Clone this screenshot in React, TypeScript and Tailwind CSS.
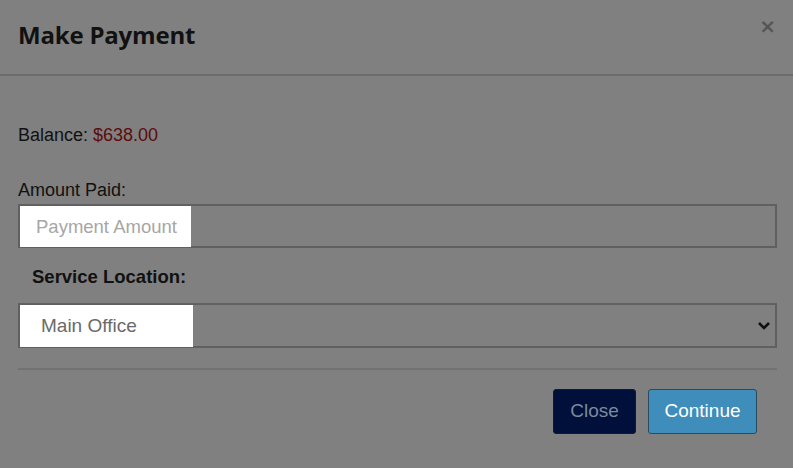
import React from "react";

export default function App() {
  return (
    <div className="w-[793px] h-[468px] bg-[#808080] overflow-hidden" style={{ fontFamily: '"Liberation Sans", Arial, sans-serif' }}>
      <div className="h-[76px] flex items-start justify-between border-b-2 border-[#6c6c6c]">
        <h1 className="pl-[18px] pt-[19px] text-[24px] leading-[32px] font-bold text-[#111] tracking-[-0.2px]" style={{ fontFamily: '"Open Sans", sans-serif' }}>
          Make Payment
        </h1>
        <div className="pr-[17px] pt-[14px] text-[#555] text-[20px] font-bold leading-[24px]" style={{ fontFamily: '"DejaVu Sans", sans-serif' }}>×</div>
      </div>
      <div className="px-[18px] pr-[16px]">
        <div className="pt-[48px] text-[18px] leading-[22px] text-[#111]">
          Balance: <span className="text-[#5c0b0d]">$638.00</span>
        </div>
        <div className="pt-[33px] text-[18px] leading-[22px] text-[#111]">Amount Paid:</div>
        <div className="mt-[3px] h-[44px] border-2 border-[#606060] flex">
          <div className="w-[171px] h-[41px] bg-white flex items-center pl-[16px] text-[18.5px] text-[#a6a6a6]">Payment Amount</div>
        </div>
        <div className="pt-[18px] pl-[14px] text-[18.5px] font-bold leading-[22px] text-[#111]">Service Location:</div>
        <div className="mt-[15px] h-[45px] border-2 border-[#606060] flex items-center justify-between">
          <div className="w-[173px] h-[42px] self-start bg-white flex items-center pl-[21px] text-[19px] text-[#6a6a6a]">Main Office</div>
          <svg width="14" height="10" viewBox="0 0 14 10" className="mr-[4px]">
            <path d="M2 2 L7 7 L12 2" fill="none" stroke="#111" strokeWidth="2.6" />
          </svg>
        </div>
        <div className="mt-[20px] border-t-2 border-[#727272]" />
        <div className="flex justify-end gap-[12px] pt-[19px] pr-[20px]">
          <div className="w-[83px] h-[45px] rounded-[3px] bg-[#00103a] border border-[#1a1a1a] flex items-center justify-center text-[19px] text-[#7a8aa0]">Close</div>
          <div className="w-[109px] h-[45px] rounded-[3px] bg-[#3e8dbb] border border-[#2a4a60] flex items-center justify-center text-[19px] text-white">Continue</div>
        </div>
      </div>
    </div>
  );
}
